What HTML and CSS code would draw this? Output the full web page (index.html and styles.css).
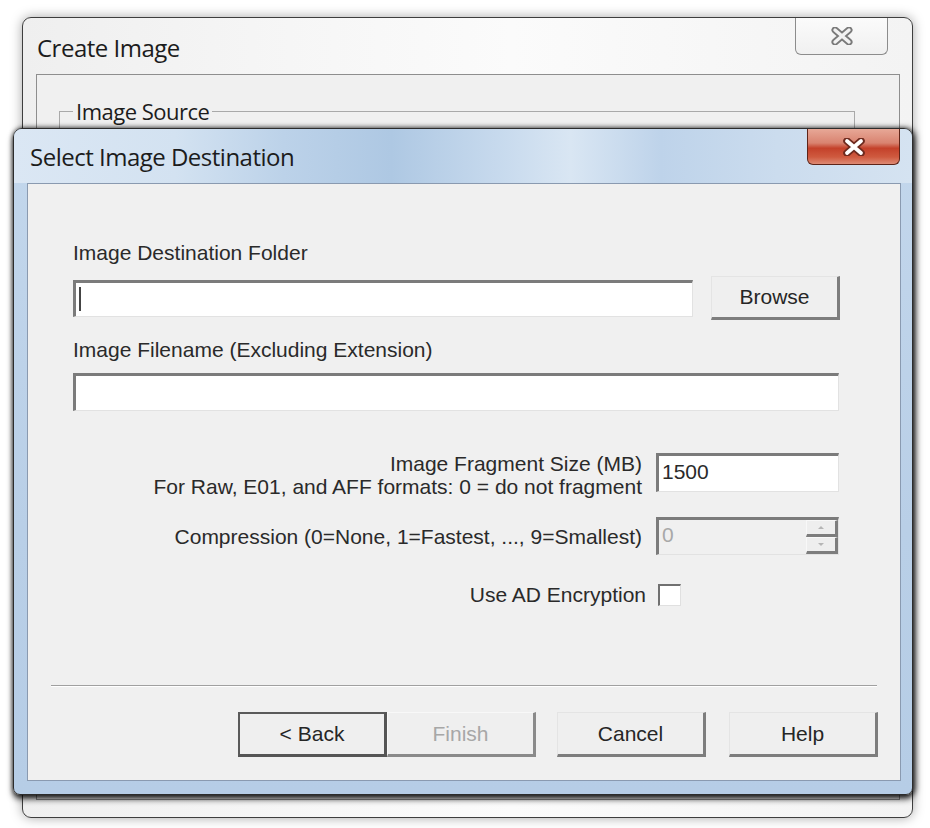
FILE: index.html
```html
<!DOCTYPE html>
<html>
<head>
<meta charset="utf-8">
<link rel="stylesheet" href="styles.css">
</head>
<body>
<div class="desktop">
  <div class="win win-back">
    <div class="titlebar">
      <span class="title">Create Image</span>
      <div class="close close-ghost">
        <svg width="22" height="18" viewBox="0 0 22 18"><path d="M4 3 L18 15 M18 3 L4 15" stroke="#7a7a7a" stroke-width="7" stroke-linecap="round" fill="none"/><path d="M4 3 L18 15 M18 3 L4 15" stroke="#f2f2f2" stroke-width="3.4" stroke-linecap="round" fill="none"/></svg>
      </div>
    </div>
    <div class="panel">
      <fieldset class="group"><legend>Image Source</legend></fieldset>
    </div>
  </div>

  <div class="win win-front">
    <div class="titlebar">
      <span class="title">Select Image Destination</span>
      <div class="close close-red">
        <svg width="22" height="18" viewBox="0 0 22 18"><path d="M4 3 L18 15 M18 3 L4 15" stroke="#6e2a1e" stroke-width="7.5" stroke-linecap="round" fill="none"/><path d="M4 3 L18 15 M18 3 L4 15" stroke="#ffffff" stroke-width="3.8" stroke-linecap="round" fill="none"/></svg>
      </div>
    </div>
    <div class="client">
      <div class="label first">Image Destination Folder</div>
      <div class="row-folder">
        <div class="input wide-a"><span class="caret"></span></div>
        <div class="btn browse">Browse</div>
      </div>
      <div class="label second">Image Filename (Excluding Extension)</div>
      <div class="input wide-b"></div>

      <div class="opts">
        <div class="opt-label two-line">Image Fragment Size (MB)<br>For Raw, E01, and AFF formats: 0 = do not fragment</div>
        <div class="input field frag">1500</div>

        <div class="opt-label comp-label">Compression (0=None, 1=Fastest, ..., 9=Smallest)</div>
        <div class="input field spin disabled">
          <span class="spin-val">0</span>
          <div class="spin-btns">
            <div class="spin-up"><span class="arrow-up"></span></div>
            <div class="spin-down"><span class="arrow-down"></span></div>
          </div>
        </div>

        <div class="opt-label chk-label">Use AD Encryption</div>
        <div class="chk-cell"><div class="checkbox"></div></div>
      </div>

      <div class="separator"></div>

      <div class="buttons">
        <div class="btn wiz default">&lt; Back</div>
        <div class="btn wiz disabled-btn">Finish</div>
        <div class="btn wiz gap-a">Cancel</div>
        <div class="btn wiz gap-b">Help</div>
      </div>
    </div>
  </div>
</div>
</body>
</html>
```
FILE: styles.css
```css
html, body {
  margin: 0;
  padding: 0;
  background: #ffffff;
}
body {
  width: 930px;
  height: 828px;
  overflow: hidden;
  font-family: "Liberation Sans", Arial, sans-serif;
}
.desktop {
  position: relative;
  width: 930px;
  height: 828px;
  background: #ffffff;
}
.win {
  position: absolute;
  box-sizing: border-box;
  display: flex;
  flex-direction: column;
}
.titlebar {
  position: relative;
  display: flex;
  align-items: center;
  flex: none;
}
.title {
  font-family: "Open Sans", "Noto Sans", sans-serif;
  font-size: 24px;
  letter-spacing: -0.5px;
  color: #1c1c1c;
}
.close {
  position: absolute;
  top: 0;
  right: 12px;
  width: 93px;
  height: 36px;
  box-sizing: border-box;
  display: flex;
  align-items: center;
  justify-content: center;
  border-radius: 0 0 6px 6px;
}
.close-ghost {
  border: 1px solid #8c8c8c;
  border-top: none;
  height: 37px;
  background: linear-gradient(180deg, #fbfbfb, #f0f0f0);
}
.close-red {
  border: 1px solid #5e2418;
  border-top: none;
  background: linear-gradient(180deg, #e7a897 0%, #d98370 40%, #c4412a 55%, #cf5a3f 80%, #de8a74 100%);
}

/* back window */
.win-back {
  left: 22px;
  top: 17px;
  width: 891px;
  height: 801px;
  border: 1px solid #3e3e3e;
  border-radius: 9px;
  background: linear-gradient(90deg, #efefef 0%, #f6f6f6 30%, #fbfbfb 55%, #f3f3f3 100%);
  padding: 0 12px 17px 13px;
  box-shadow: 0 0 12px rgba(0, 0, 0, 0.35);
}
.win-back .titlebar {
  height: 56px;
}
.win-back .title {
  margin-left: 1px;
  margin-top: 2px;
}
.panel {
  flex: 1;
  border: 1px solid #8e8e8e;
  background: #f0f0f0;
  padding: 23px 44px 0 22px;
}
.group {
  margin: 0;
  height: 640px;
  border: 1px solid #a9a9a9;
  padding: 0 0 0 13px;
}
.group legend {
  padding: 0 3px;
  font-family: "Open Sans", "Noto Sans", sans-serif;
  font-size: 22px;
  letter-spacing: -0.5px;
  line-height: 26px;
  color: #1c1c1c;
}

/* front window */
.win-front {
  left: 13px;
  top: 128px;
  width: 900px;
  height: 667px;
  border: 1px solid #2c2c2c;
  border-radius: 9px 9px 7px 7px;
  padding: 0 11px 13px 13px;
  background: linear-gradient(180deg, #c3d7ec 0%, #b9cfe7 60%, #b6cde6 100%);
  box-shadow: 0 4px 6px rgba(0, 0, 0, 0.75), 3px 0 6px rgba(0, 0, 0, 0.5), 0 0 4px rgba(0, 0, 0, 0.5);
}
.win-front .titlebar {
  height: 54px;
  margin: 0 -11px 0 -13px;
  padding: 0 11px 0 16px;
  border-radius: 8px 8px 0 0;
  background: linear-gradient(90deg, #dbe7f4 0%, #d3e2f1 18%, #bcd2e9 30%, #aec8e3 42%, #c9dbee 55%, #d9e6f3 62%, #bed3ea 72%, #cbdcee 85%, #d5e3f1 100%);
}
.win-front .titlebar .close {
  right: 12px;
}
.client {
  flex: 1;
  border: 1px solid #8a9ab0;
  background: #f0f0f0;
  padding: 0 61px 0 45px;
  display: flex;
  flex-direction: column;
  color: #2a2a2a;
  font-size: 21px;
}
.label {
  height: 24px;
  line-height: 24px;
}
.label.first {
  margin-top: 57px;
}
.label.second {
  margin-top: 18px;
}
.row-folder {
  margin-top: 11px;
  height: 44px;
  display: flex;
  align-items: center;
  gap: 18px;
  margin-right: -2px;
}
.input {
  box-sizing: border-box;
  background: #ffffff;
  border-top: 3px solid #7b7b7b;
  border-left: 3px solid #7b7b7b;
  border-right: 1px solid #e2e2e2;
  border-bottom: 1px solid #e2e2e2;
}
.wide-a {
  width: 620px;
  height: 37px;
  display: flex;
  align-items: center;
  padding-left: 3px;
}
.caret {
  display: block;
  width: 2px;
  height: 24px;
  background: #444;
}
.wide-b {
  margin-top: 11px;
  height: 38px;
}
.btn {
  box-sizing: border-box;
  display: flex;
  align-items: center;
  justify-content: center;
  background: #efefef;
  border-top: 1px solid #e4e4e4;
  border-left: 1px solid #e4e4e4;
  border-right: 3px solid #7d7d7d;
  border-bottom: 3px solid #7d7d7d;
  color: #262626;
  font-size: 21px;
}
.browse {
  width: 129px;
  height: 44px;
}

.opts {
  margin-top: 41px;
  display: grid;
  grid-template-columns: 1fr 183px;
  column-gap: 14px;
  row-gap: 0;
}
.opt-label {
  text-align: right;
  line-height: 23px;
}
.two-line {
  height: 47px;
}
.field {
  height: 39px;
  font-size: 21px;
  display: flex;
  align-items: center;
  padding-left: 3px;
  padding-bottom: 4px;
  color: #2a2a2a;
  margin-top: 1px;
}
.comp-label {
  margin-top: 18px;
  height: 38px;
  display: flex;
  align-items: center;
  justify-content: flex-end;
}
.spin {
  margin-top: 18px;
  height: 38px;
  padding: 0;
  justify-content: space-between;
  align-items: stretch;
}
.disabled {
  background: #f0f0f0;
}
.spin-val {
  color: #a8a8a8;
  padding-left: 3px;
  line-height: 30px;
}
.spin-btns {
  width: 32px;
  display: flex;
  flex-direction: column;
}
.spin-up, .spin-down {
  flex: 1;
  box-sizing: border-box;
  border-top: 1px solid #f8f8f8;
  border-left: 1px solid #f8f8f8;
  border-right: 3px solid #7d7d7d;
  border-bottom: 3px solid #7d7d7d;
  display: flex;
  align-items: center;
  justify-content: center;
  background: #eeeeee;
}
.arrow-up {
  width: 0;
  height: 0;
  border-left: 3px solid transparent;
  border-right: 3px solid transparent;
  border-bottom: 3px solid #b5b5b5;
}
.arrow-down {
  width: 0;
  height: 0;
  border-left: 3px solid transparent;
  border-right: 3px solid transparent;
  border-top: 3px solid #b5b5b5;
}
.chk-label {
  margin-top: 29px;
  height: 22px;
  line-height: 22px;
  margin-right: -4px;
}
.chk-cell {
  margin-top: 29px;
  height: 22px;
  padding-left: 2px;
}
.checkbox {
  box-sizing: border-box;
  width: 23px;
  height: 22px;
  background: #ffffff;
  border-top: 2px solid #707070;
  border-left: 2px solid #707070;
  border-right: 1px solid #e0e0e0;
  border-bottom: 1px solid #e0e0e0;
}

.separator {
  margin: 79px -38px 0 -22px;
  height: 1px;
  background: #a0a0a0;
  border-bottom: 1px solid #ffffff;
}
.buttons {
  margin-top: 25px;
  margin-right: -39px;
  display: flex;
  justify-content: flex-end;
}
.wiz {
  width: 149px;
  height: 45px;
}
.default {
  border: 2px solid #5a5a5a;
  border-right: 3px solid #555;
  border-bottom: 3px solid #555;
}
.disabled-btn {
  color: #a7a7a7;
  border-top-color: #f8f8f8;
  border-left-color: #f8f8f8;
  border-right-color: #8a8a8a;
  border-bottom-color: #8a8a8a;
}
.gap-a {
  margin-left: 21px;
}
.gap-b {
  margin-left: 23px;
}
```
